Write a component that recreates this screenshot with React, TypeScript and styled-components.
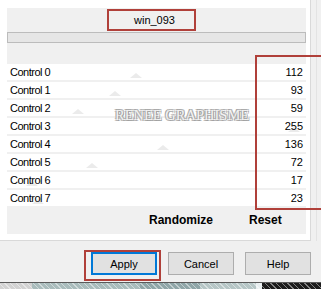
import styled, { createGlobalStyle } from 'styled-components'

const GlobalStyle = createGlobalStyle`
  html, body {
    margin: 0;
    padding: 0;
    background: #f0f0f0;
  }
  * {
    box-sizing: border-box;
  }
`

const controls = [112, 93, 59, 255, 136, 72, 17, 23]

const Page = styled.div`
  position: relative;
  width: 321px;
  height: 289px;
  overflow: hidden;
  display: flex;
  flex-direction: column;
  background: #f0f0f0;
  font-family: 'Liberation Sans', Arial, sans-serif;
  color: #000;
`

const Top = styled.div`
  display: flex;
  height: 241px;
`

const Frame = styled.div`
  width: 311px;
  height: 241px;
  padding: 8px 4px 6px 7px;
  background: #fff;
  border-right: 1px solid #d9d9d9;
  border-bottom: 1px solid #d9d9d9;
`

const Gutter = styled.div`
  flex: 1;
  background: linear-gradient(to right, #f0f0f0 5px, #e3e3e3 5px, #e3e3e3 6px, #f0f0f0 6px);
`

const Panel = styled.div`
  position: relative;
  height: 226px;
  background: #f0f0f0;
  display: flex;
  flex-direction: column;
`

const Header = styled.div`
  height: 24px;
  display: flex;
  justify-content: center;
  padding-top: 1px;
  padding-right: 10px;
`

const NameBox = styled.div`
  width: 89px;
  height: 22px;
  border: 2px solid #b0403a;
  display: flex;
  align-items: center;
  justify-content: center;
  padding-left: 6px;
  font-size: 11px;
`

const Progress = styled.div`
  height: 11px;
  background: #e6e6e6;
  border: 1px solid #bcbcbc;
`

const Rows = styled.div`
  margin-top: 21px;
  display: flex;
  flex-direction: column;
  gap: 2px;
`

const Row = styled.div`
  position: relative;
  height: 16px;
  background: #fff;
  display: flex;
  align-items: center;
  justify-content: space-between;
  padding: 0 3px 0 3px;
  font-size: 11px;
`

const Label = styled.span`
  position: relative;
  letter-spacing: -0.5px;
`

const Value = styled.span`
  position: relative;
`

const Thumb = styled.span`
  position: absolute;
  bottom: 2px;
  width: 0;
  height: 0;
  border-left: 6px solid transparent;
  border-right: 6px solid transparent;
  border-bottom: 5px solid #ebebeb;
`

const Footer = styled.div`
  flex: 1;
  display: flex;
  align-items: center;
  padding-left: 142px;
  padding-bottom: 1px;
  gap: 36px;
  font-size: 12px;
  font-weight: bold;
`

const Watermark = styled.div`
  position: absolute;
  left: 108px;
  top: 99px;
  font-family: 'Liberation Serif', 'Times New Roman', serif;
  font-size: 14.5px;
  line-height: 16px;
  color: #f2f2f2;
  text-shadow: -1px -1px 0 #a8a8a8, 1px 1px 0 #a0a0a0, 1px -1px 0 #b8b8b8, -1px 1px 0 #b8b8b8;
  pointer-events: none;
`

const ButtonBar = styled.div`
  height: 41px;
  display: flex;
  justify-content: flex-end;
  align-items: flex-start;
  gap: 11px;
  padding: 11px 10px 0 0;
`

const Highlight = styled.div`
  position: relative;
`

const Mark = styled.span`
  position: absolute;
  left: -7px;
  right: -4px;
  top: -2px;
  bottom: -6px;
  border: 2px solid #b0403a;
  pointer-events: none;
`

const Button = styled.button<{ $primary?: boolean }>`
  width: 66px;
  height: 23px;
  margin: 0;
  padding: 0;
  background: #e1e1e1;
  border: ${(p) => (p.$primary ? '2px solid #0078d7' : '1px solid #adadad')};
  font-family: 'Liberation Sans', Arial, sans-serif;
  font-size: 11px;
  color: #000;
`

const Strip = styled.div`
  height: 7px;
  border-top: 1px solid #5a5a5a;
  background:
    repeating-linear-gradient(45deg, transparent 0 3px, rgba(255, 255, 255, 0.45) 3px 4px),
    linear-gradient(
      to right,
      #d2d2d2 0 32px,
      #a9bcbc 32px 140px,
      #8fa6a8 140px 200px,
      #b6c6c6 200px 256px,
      #e8eef0 256px 262px,
      #1c1c1c 262px
    );
`

const Annotation = styled.span`
  position: absolute;
  left: 255px;
  top: 55px;
  width: 80px;
  height: 155px;
  border: 2px solid #b0403a;
  pointer-events: none;
`

export default function App() {
  return (
    <>
      <GlobalStyle />
      <Page>
        <Top>
          <Frame>
            <Panel>
              <Header>
                <NameBox>win_093</NameBox>
              </Header>
              <Progress />
              <Rows>
                {controls.map((v, i) => (
                  <Row key={i}>
                    <Thumb style={{ left: `${v * 1.1}px` }} />
                    <Label>Control {i}</Label>
                    <Value>{v}</Value>
                  </Row>
                ))}
              </Rows>
              <Footer>
                <span>Randomize</span>
                <span>Reset</span>
              </Footer>
              <Watermark>RENEE GRAPHISME</Watermark>
            </Panel>
          </Frame>
          <Gutter />
        </Top>
        <ButtonBar>
          <Highlight>
            <Button $primary>Apply</Button>
            <Mark />
          </Highlight>
          <Button>Cancel</Button>
          <Button>Help</Button>
        </ButtonBar>
        <Strip />
        <Annotation />
      </Page>
    </>
  )
}
